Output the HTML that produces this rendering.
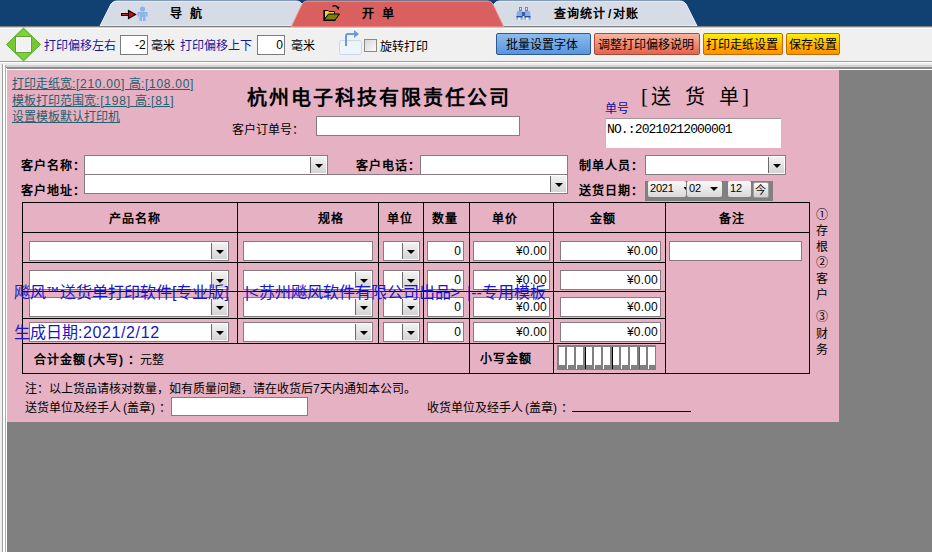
<!DOCTYPE html>
<html lang="zh-CN"><head><meta charset="utf-8">
<style>
*{margin:0;padding:0;box-sizing:border-box}
html,body{width:932px;height:552px;overflow:hidden;background:#f0f0f0;font-family:"Liberation Sans",sans-serif;font-size:12px;color:#000}
.a{position:absolute}
.t{position:absolute;white-space:nowrap;line-height:12px;font-size:12px;padding-top:1px}
.b{font-weight:bold;letter-spacing:1px}
.in{position:absolute;background:#fff;border:1px solid #877a82}
.cb{position:absolute;background:#fff;border:1px solid #877a82}
.cb i{position:absolute;top:1px;bottom:1px;right:1px;width:16px;background:linear-gradient(#f2f2f2,#d4d4d4);border-left:1px solid #6a6a6a}
.cb i:after{content:"";position:absolute;left:4px;top:7px;border-left:4px solid transparent;border-right:4px solid transparent;border-top:4px solid #000}
.hl{position:absolute;height:1px;background:#000}
.vl{position:absolute;width:1px;background:#000}
.btn{position:absolute;height:22px;border-radius:2px;font-size:12px;line-height:22px;text-align:center;white-space:nowrap}
.wm{font-size:16px;line-height:16px;color:#1616cc}
.p{letter-spacing:2px}
.po{letter-spacing:0;padding-left:2px}
.pbo{letter-spacing:1px;padding-left:2px}
.pb{letter-spacing:3px}
.num{font-size:12px;letter-spacing:0.2px;margin-top:-1px}
</style></head><body>

<!-- tab bar -->
<div class="a" style="left:0;top:0;width:932px;height:26px;background:#114072"></div>

<div class="a" style="left:0;top:27px;width:932px;height:1px;background:#d0d0d0"></div>
<div class="a" style="left:0;top:28px;width:932px;height:1px;background:#ffffff"></div>
<svg class="a" style="left:0;top:0" width="932" height="28">
  <path d="M100 26 L110 6 Q112 1 117 1 L296 1 Q301 1 303 6 L313 26 Z" fill="#d5dce6" stroke="#f4f8fc" stroke-width="1"/>
  <path d="M483 26 L493 6 Q495 1 500 1 L680 1 Q685 1 687 6 L697 26 Z" fill="#d5dce6" stroke="#f4f8fc" stroke-width="1"/>
  <path d="M291 27 L301 6 Q303 1 308 1 L487 1 Q492 1 494 6 L504 27 Z" fill="#da6060" stroke="#eea8a8" stroke-width="1"/>
</svg>
<div class="a" style="left:0;top:26px;width:291px;height:1px;background:#808080"></div>
<div class="a" style="left:504px;top:26px;width:428px;height:1px;background:#808080"></div>
<svg class="a" style="left:118px;top:3px" width="34" height="20" viewBox="0 0 34 20">
  <rect x="3.5" y="10.5" width="8" height="2" fill="#c02020" stroke="#000" stroke-width="1"/>
  <path d="M10.5 7.5 L17.5 11.5 L10.5 15.5 Z" fill="#f00000" stroke="#000" stroke-width="1.2" stroke-linejoin="miter"/>
  <circle cx="24.5" cy="6" r="2.6" fill="#8ab4e8"/>
  <path d="M19.5 9 H29.5 V13.5 H28 V10.5 H27.5 V18 H25 V14 H24 V18 H21.5 V10.5 H21 V13.5 H19.5 Z" fill="#8ab4e8"/>
</svg>
<svg class="a" style="left:318px;top:3px" width="28" height="20" viewBox="0 0 28 20">
  <path d="M6.5 7.5 H10 L11 8.5 H16.5 V11.5 H10.5 L6.5 16.5 Z" fill="#f4d040" stroke="#000" stroke-width="1"/>
  <path d="M6 17 L10.5 11 H21.5 L17 17 Z" fill="#808000" stroke="#000" stroke-width="1"/>
  <path d="M6 7 V17.5 H17.5" fill="none" stroke="#000" stroke-width="1.2"/>
  <path d="M14.5 3.5 Q17 1.5 20 4.5" fill="none" stroke="#000" stroke-width="1.2"/>
  <path d="M18.5 4.5 L21.5 3.5 L20.5 7 Z" fill="#000"/>
</svg>
<svg class="a" style="left:510px;top:3px" width="28" height="20" viewBox="0 0 28 20">
  <rect x="9" y="4" width="3" height="4" fill="#6a88c8"/>
  <rect x="15" y="4" width="3" height="4" fill="#6a88c8"/>
  <path d="M7.5 8 H12.5 V17 H6.5 V11 Z" fill="#86aee8"/>
  <path d="M14.5 8 H19.5 L20.5 11 V17 H14.5 Z" fill="#86aee8"/>
  <rect x="12" y="9" width="3" height="4" fill="#3a5aa8"/>
  <rect x="6.5" y="13" width="6" height="1.5" fill="#2a4a98"/>
  <rect x="14.5" y="13" width="6" height="1.5" fill="#2a4a98"/>
  <rect x="8" y="14.5" width="2.5" height="2.5" fill="#e8f0ff"/>
  <rect x="16" y="14.5" width="2.5" height="2.5" fill="#e8f0ff"/>
  <rect x="10" y="5" width="1" height="1.5" fill="#fff"/>
  <rect x="16" y="5" width="1" height="1.5" fill="#fff"/>
</svg>
<div class="t b" style="left:170px;top:7px">导</div>
<div class="t b" style="left:190px;top:7px">航</div>
<div class="t b" style="left:362px;top:7px">开</div>
<div class="t b" style="left:382px;top:7px">单</div>
<div class="t b" style="left:554px;top:7px">查询统计<span style="letter-spacing:1.5px;margin-left:2px">/</span>对账</div>

<!-- toolbar -->
<div class="a" style="left:0;top:61px;width:932px;height:1px;background:#a0a0a0"></div>
<div class="a" style="left:0;top:62px;width:932px;height:1px;background:#ffffff"></div><div class="a" style="left:0;top:63px;width:932px;height:2px;background:#ececec"></div>

<svg class="a" style="left:0;top:26px" width="48" height="38" viewBox="0 0 48 38">
  <polygon points="23.5,2 40.5,18.5 23.5,35 6.5,18.5" fill="#74c834" stroke="#5cae2c" stroke-width="1"/>
  <polygon points="23.5,4 30.5,10.5 16.5,10.5" fill="#80d040"/>
  <polygon points="23.5,33 30.5,26.5 16.5,26.5" fill="#80d040"/>
  <rect x="15.5" y="10.5" width="16" height="16" fill="#f2f2f2" stroke="#5aa828" stroke-width="1"/>
  <rect x="16.5" y="11.5" width="14" height="14" fill="none" stroke="#ffffff" stroke-width="1"/>
</svg>
<div class="t" style="left:44px;top:39px;color:#1818a0">打印偏移左右</div>
<div class="in" style="left:120px;top:35px;width:28px;height:20px;border-color:#7c7c7c"></div>
<div class="t num" style="left:122px;top:39px;width:24px;text-align:right">-2</div>
<div class="t" style="left:151px;top:39px">毫米</div>
<div class="t" style="left:180px;top:39px;color:#1818a0">打印偏移上下</div>
<div class="in" style="left:257px;top:35px;width:28px;height:20px;border-color:#7c7c7c"></div>
<div class="t num" style="left:259px;top:39px;width:24px;text-align:right">0</div>
<div class="t" style="left:291px;top:39px">毫米</div>
<svg class="a" style="left:338px;top:30px" width="26" height="26">
  <rect x="1.5" y="10.5" width="22" height="14" rx="2" fill="#eef4fc" stroke="#c8d8ec"/>
  <path d="M8 16 L8 6 Q8 4 10 4 L17 4" fill="none" stroke="#6a9ad8" stroke-width="2"/>
  <path d="M16 0 L21 4 L16 8 Z" fill="#6a9ad8"/>
</svg>
<div class="a" style="left:364px;top:39px;width:13px;height:13px;border:1px solid #8a8a8a;background:linear-gradient(135deg,#d8d8d8,#fafafa)"></div>
<div class="t" style="left:380px;top:40px">旋转打印</div>

<div class="btn" style="left:496px;top:33px;width:95px;padding-right:4px;border:1px solid #2c5a94;background:linear-gradient(#8cbcf0,#5a94dc)">批量设置字体</div>
<div class="btn" style="left:594px;top:33px;width:106px;padding-right:2px;border:1px solid #b04836;background:linear-gradient(#f8b4a0,#e4644c)">调整打印偏移说明</div>
<div class="btn" style="left:703px;top:33px;width:80px;padding-right:2px;border:1px solid #c06a00;background:linear-gradient(#fff000,#ffb000 60%,#ff9000)">打印走纸设置</div>
<div class="btn" style="left:786px;top:33px;width:54px;border:1px solid #c06a00;background:linear-gradient(#fff000,#ffb000 60%,#ff9000)">保存设置</div>

<!-- container borders -->
<div class="a" style="left:2px;top:64px;width:1px;height:488px;background:#a0a0a0"></div>
<div class="a" style="left:3px;top:64px;width:2px;height:488px;background:#ffffff"></div>
<div class="a" style="left:5px;top:65px;width:927px;height:487px;background:#808080"></div>
<div class="a" style="left:5px;top:65px;width:927px;height:2px;background:#d2d2d2"></div><div class="a" style="left:5px;top:67px;width:927px;height:2px;background:#8c8c8c"></div>
<div class="a" style="left:5px;top:69px;width:927px;height:1px;background:#ffffff"></div>
<div class="a" style="left:5px;top:65px;width:1px;height:487px;background:#c8a0a8"></div>
<div class="a" style="left:6px;top:68px;width:1px;height:484px;background:#ffffff"></div>

<!-- pink form -->
<div id="form" class="a" style="left:7px;top:70px;width:832px;height:352px;background:#e6b1c3"></div>


<!-- links -->
<div class="t" style="left:12px;top:77px;color:#24606e;text-decoration:underline">打印走纸宽<span style="letter-spacing:.7px">:[210.00] </span>高<span style="letter-spacing:.7px">:[108.00]</span></div>
<div class="t" style="left:12px;top:94px;color:#24606e;text-decoration:underline">模板打印范围宽<span style="letter-spacing:.8px">:[198] </span>高<span style="letter-spacing:.8px">:[81]</span></div>
<div class="t" style="left:12px;top:110px;color:#24606e;text-decoration:underline">设置模板默认打印机</div>

<div class="t b" style="left:247px;top:87px;font-size:20px;line-height:20px;letter-spacing:2.0px">杭州电子科技有限责任公司</div>
<div class="t" style="left:641px;top:85px;font-size:21px;line-height:21px;font-family:'Liberation Serif',serif">[</div>
<div class="t" style="left:651px;top:86px;font-size:20px;line-height:20px">送</div>
<div class="t" style="left:685px;top:86px;font-size:20px;line-height:20px">货</div>
<div class="t" style="left:719px;top:86px;font-size:20px;line-height:20px">单</div>
<div class="t" style="left:742px;top:85px;font-size:21px;line-height:21px;font-family:'Liberation Serif',serif">]</div>
<div class="t" style="left:605px;top:102px;color:#1010a0">单号</div>
<div class="a" style="left:605px;top:118px;width:176px;height:30px;background:#fff;border-top:1px solid #a8949c;border-left:1px solid #c8b4bc"></div>
<div class="t" style="left:607px;top:123px;font-family:'Liberation Mono',monospace;font-size:13px;letter-spacing:-0.87px">NO.:20210212000001</div>

<div class="t" style="left:232px;top:123px">客户订单号：</div>
<div class="in" style="left:316px;top:116px;width:204px;height:20px"></div>

<div class="t b" style="left:21px;top:159px">客户名称：</div>
<div class="cb" style="left:84px;top:155px;width:244px;height:20px"><i></i></div>
<div class="t b" style="left:356px;top:159px">客户电话：</div>
<div class="in" style="left:420px;top:155px;width:148px;height:20px"></div>
<div class="t b" style="left:579px;top:159px">制单人员：</div>
<div class="cb" style="left:645px;top:155px;width:141px;height:20px"><i></i></div>

<div class="t b" style="left:21px;top:184px">客户地址：</div>
<div class="cb" style="left:84px;top:174px;width:484px;height:20px"><i></i></div>
<div class="t b" style="left:579px;top:184px">送货日期：</div>
<div class="a" style="left:645px;top:181px;width:128px;height:20px;background:#808080"></div>
<div class="a" style="left:648px;top:181px;width:38px;height:16px;background:linear-gradient(#fafafa,#d8d8d8);border-radius:2px"></div>
<div class="a" style="left:687px;top:181px;width:35px;height:16px;background:linear-gradient(#fafafa,#d8d8d8);border-radius:2px"></div>
<div class="a" style="left:728px;top:181px;width:23px;height:16px;background:linear-gradient(#fafafa,#d8d8d8);border-radius:2px"></div>
<div class="a" style="left:753px;top:182px;width:16px;height:16px;background:linear-gradient(#fafafa,#d0d0d0);border:1px solid #a0a0a0;border-radius:2px"></div>
<div class="t" style="left:650px;top:181px;font-size:11px;letter-spacing:-0.2px">2021</div>
<div class="a" style="left:684px;top:187px;width:2px;height:3px;overflow:hidden"><div style="border-left:3px solid transparent;border-right:3px solid transparent;border-top:3px solid #000;margin-left:-1px"></div></div>
<div class="t" style="left:689px;top:181px;font-size:11px;letter-spacing:-0.2px">02</div>
<div class="a" style="left:710px;top:187px;border-left:4px solid transparent;border-right:4px solid transparent;border-top:4px solid #000"></div>
<div class="t" style="left:730px;top:181px;font-size:11px;letter-spacing:-0.2px">12</div>
<div class="t" style="left:755px;top:183px;font-size:11px">今</div>

<!-- table -->
<div class="hl" style="left:22px;top:202px;width:788px"></div>
<div class="hl" style="left:22px;top:232px;width:788px"></div>
<div class="hl" style="left:22px;top:262px;width:644px"></div>
<div class="hl" style="left:22px;top:291px;width:644px"></div>
<div class="hl" style="left:22px;top:318px;width:644px"></div>
<div class="hl" style="left:22px;top:343px;width:644px"></div>
<div class="hl" style="left:22px;top:373px;width:788px"></div>
<div class="vl" style="left:22px;top:202px;height:172px"></div>
<div class="vl" style="left:237px;top:202px;height:142px"></div>
<div class="vl" style="left:378px;top:202px;height:142px"></div>
<div class="vl" style="left:423px;top:202px;height:142px"></div>
<div class="vl" style="left:469px;top:202px;height:172px"></div>
<div class="vl" style="left:553px;top:202px;height:172px"></div>
<div class="vl" style="left:665px;top:202px;height:172px"></div>
<div class="vl" style="left:809px;top:202px;height:172px"></div>

<div class="t b" style="left:109px;top:212px">产品名称</div>
<div class="t b" style="left:318px;top:212px">规格</div>
<div class="t b" style="left:387px;top:212px">单位</div>
<div class="t b" style="left:432px;top:212px">数量</div>
<div class="t b" style="left:492px;top:212px">单价</div>
<div class="t b" style="left:590px;top:212px">金额</div>
<div class="t b" style="left:719px;top:212px">备注</div>
<div class="cb" style="left:29px;top:241px;width:200px;height:20px"><i></i></div>
<div class="in" style="left:243px;top:241px;width:130px;height:20px"></div>
<div class="cb" style="left:383px;top:241px;width:37px;height:20px"><i></i></div>
<div class="in" style="left:427px;top:241px;width:37px;height:20px"></div>
<div class="t num" style="left:429px;top:245px;width:32px;text-align:right">0</div>
<div class="in" style="left:473px;top:241px;width:77px;height:20px"></div>
<div class="t num" style="left:475px;top:245px;width:72px;text-align:right">¥0.00</div>
<div class="in" style="left:560px;top:241px;width:101px;height:20px"></div>
<div class="t num" style="left:562px;top:245px;width:96px;text-align:right">¥0.00</div>
<div class="cb" style="left:29px;top:270px;width:200px;height:20px"><i></i></div>
<div class="cb" style="left:243px;top:270px;width:130px;height:20px"><i></i></div>
<div class="cb" style="left:383px;top:270px;width:37px;height:20px"><i></i></div>
<div class="in" style="left:427px;top:270px;width:37px;height:20px"></div>
<div class="t num" style="left:429px;top:274px;width:32px;text-align:right">0</div>
<div class="in" style="left:473px;top:270px;width:77px;height:20px"></div>
<div class="t num" style="left:475px;top:274px;width:72px;text-align:right">¥0.00</div>
<div class="in" style="left:560px;top:270px;width:101px;height:20px"></div>
<div class="t num" style="left:562px;top:274px;width:96px;text-align:right">¥0.00</div>
<div class="cb" style="left:29px;top:297px;width:200px;height:20px"><i></i></div>
<div class="cb" style="left:243px;top:297px;width:130px;height:20px"><i></i></div>
<div class="cb" style="left:383px;top:297px;width:37px;height:20px"><i></i></div>
<div class="in" style="left:427px;top:297px;width:37px;height:20px"></div>
<div class="t num" style="left:429px;top:301px;width:32px;text-align:right">0</div>
<div class="in" style="left:473px;top:297px;width:77px;height:20px"></div>
<div class="t num" style="left:475px;top:301px;width:72px;text-align:right">¥0.00</div>
<div class="in" style="left:560px;top:297px;width:101px;height:20px"></div>
<div class="t num" style="left:562px;top:301px;width:96px;text-align:right">¥0.00</div>
<div class="cb" style="left:29px;top:322px;width:200px;height:20px"><i></i></div>
<div class="cb" style="left:243px;top:322px;width:130px;height:20px"><i></i></div>
<div class="cb" style="left:383px;top:322px;width:37px;height:20px"><i></i></div>
<div class="in" style="left:427px;top:322px;width:37px;height:20px"></div>
<div class="t num" style="left:429px;top:326px;width:32px;text-align:right">0</div>
<div class="in" style="left:473px;top:322px;width:77px;height:20px"></div>
<div class="t num" style="left:475px;top:326px;width:72px;text-align:right">¥0.00</div>
<div class="in" style="left:560px;top:322px;width:101px;height:20px"></div>
<div class="t num" style="left:562px;top:326px;width:96px;text-align:right">¥0.00</div>
<div class="in" style="left:669px;top:241px;width:133px;height:20px"></div>

<div class="t b" style="left:34px;top:353px">合计金额<span class="pbo">(</span>大写<span class="pb">)</span><span style="margin-left:1.5px">：</span></div>
<div class="t" style="left:140px;top:353px">元整</div>
<div class="t b" style="left:480px;top:352px">小写金额</div>
<div class="a" style="left:557px;top:345px;width:99px;height:25px;background:#808080"></div>
<div class="a" style="left:559px;top:347px;width:6px;height:18px;background:#fff"></div>
<div class="a" style="left:568px;top:347px;width:6px;height:18px;background:#fff"></div>
<div class="a" style="left:567px;top:347px;width:1px;height:22px;background:#fff"></div>
<div class="a" style="left:577px;top:347px;width:6px;height:18px;background:#fff"></div>
<div class="a" style="left:576px;top:347px;width:1px;height:22px;background:#fff"></div>
<div class="a" style="left:586px;top:347px;width:6px;height:18px;background:#fff"></div>
<div class="a" style="left:585px;top:347px;width:1px;height:22px;background:#000"></div>
<div class="a" style="left:595px;top:347px;width:6px;height:18px;background:#fff"></div>
<div class="a" style="left:594px;top:347px;width:1px;height:22px;background:#fff"></div>
<div class="a" style="left:604px;top:347px;width:6px;height:18px;background:#fff"></div>
<div class="a" style="left:603px;top:347px;width:1px;height:22px;background:#fff"></div>
<div class="a" style="left:613px;top:347px;width:6px;height:18px;background:#fff"></div>
<div class="a" style="left:612px;top:347px;width:1px;height:22px;background:#000"></div>
<div class="a" style="left:622px;top:347px;width:6px;height:18px;background:#fff"></div>
<div class="a" style="left:621px;top:347px;width:1px;height:22px;background:#fff"></div>
<div class="a" style="left:631px;top:347px;width:6px;height:18px;background:#fff"></div>
<div class="a" style="left:630px;top:347px;width:1px;height:22px;background:#fff"></div>
<div class="a" style="left:640px;top:347px;width:6px;height:18px;background:#fff"></div>
<div class="a" style="left:639px;top:347px;width:1px;height:22px;background:#c03030"></div>
<div class="a" style="left:649px;top:347px;width:6px;height:18px;background:#fff"></div>
<div class="a" style="left:648px;top:347px;width:1px;height:22px;background:#fff"></div>

<div class="t" style="left:816px;top:206px;line-height:16px;width:12px;white-space:normal">①存根②客户</div>
<div class="t" style="left:816px;top:308px;line-height:16.5px;width:12px;white-space:normal">③财务</div>

<div class="t" style="left:25px;top:382px">注：以上货品请核对数量，如有质量问题，请在收货后7天内通知本公司。</div>
<div class="t" style="left:25px;top:401px">送货单位及经手人<span class="po">(</span>盖章<span class="p">)</span><span style="margin-left:1.5px;margin-right:-1.5px">：</span></div>
<div class="in" style="left:171px;top:397px;width:137px;height:19px"></div>
<div class="t" style="left:427px;top:401px">收货单位及经手人<span class="po">(</span>盖章<span class="p">)</span><span style="margin-left:1.5px;margin-right:-1.5px">：</span></div>
<div class="a" style="left:572px;top:411px;width:119px;height:1px;background:#000"></div>

<!-- watermark -->
<div class="t wm" style="left:14px;top:284px">飚风</div>
<div class="t wm" style="left:46px;top:283px;font-size:13px">™</div>
<div class="t wm" style="left:60px;top:284px">送货单打印软件[专业版]</div>
<div class="t wm" style="left:245px;top:284px">|&lt;苏州飚风软件有限公司出品&gt;</div>
<div class="t wm" style="left:467px;top:284px">|--专用模板</div>
<div class="t wm" style="left:14px;top:324px">生成日期<span style="letter-spacing:.6px">:2021/2/12</span></div>
</body></html>
